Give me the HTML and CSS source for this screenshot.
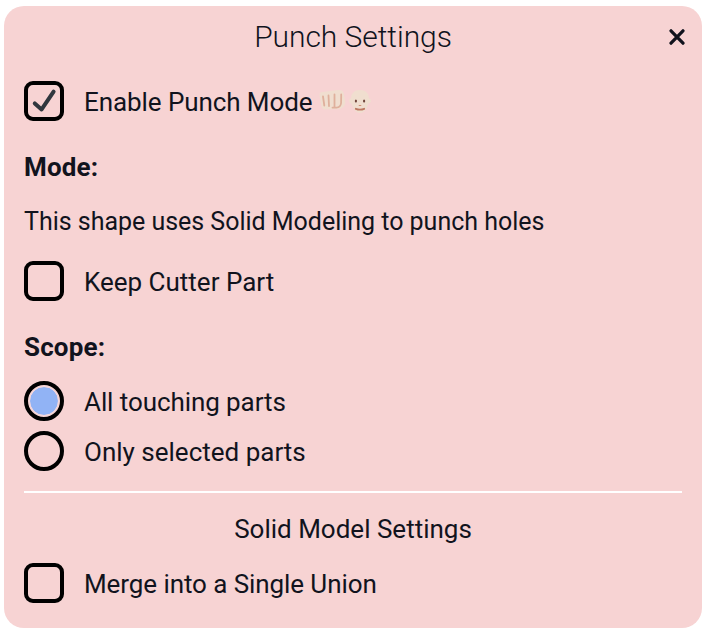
FILE: index.html
```html
<!DOCTYPE html>
<html lang="en">
<head>
<meta charset="utf-8">
<title>Punch Settings</title>
<link rel="stylesheet" href="styles.css">
</head>
<body>
<main class="panel">
  <header class="header">
    <h1 class="title">Punch Settings</h1>
    <button class="close" aria-label="Close">
      <svg width="16" height="16" viewBox="0 0 16 16"><path d="M2 1.8 14 14.2M14 1.8 2 14.2"/></svg>
    </button>
  </header>
  <div class="row">
    <span class="box"><svg class="check" width="32" height="32" viewBox="0 0 32 32"><path d="M6.8 18.4 13.6 24.4 25.6 6.6"/></svg></span>
    <span class="label tight">Enable Punch Mode</span>
    <svg class="emoji fist" width="28" height="26" viewBox="0 0 28 26">
      <path class="skin" d="M1.6 8C1 5.3 2.2 4.2 4.5 4L20 2C23.5 1.5 25.5 3 25.8 6L27.3 14C27.3 18 24.5 20.8 20 21.2L6.5 21.2C4.5 21 3.8 20 3.4 17.5Z"/>
      <path class="crease" d="M5 8.5 6.3 17.5M10.5 7.5 11 18M16.5 6.5V19M23.2 6.5 23.1 15Q22.5 19.6 18.5 19.6H14.5"/>
    </svg>
    <svg class="emoji face" width="24" height="26" viewBox="0 0 24 26">
      <path class="skin" d="M12 2C6.5 2 3.2 5.5 3 10.2Q.8 10.6 1 13Q1.2 15.3 3.5 15.5C5 20.5 8 25 12 25S19 20.5 20.5 15.5Q22.8 15.3 23 13Q23.2 10.6 21 10.2C20.8 5.5 17.5 2 12 2Z"/>
      <ellipse class="eye" cx="7.9" cy="13" rx="1.1" ry="1.6"/>
      <ellipse class="eye" cx="16.1" cy="13" rx="1.1" ry="1.6"/>
      <path class="nose" d="M10.3 17Q12 19 13.7 17Z"/>
      <path class="mouth" d="M7.8 20.8Q12 22.6 16.2 20.8"/>
    </svg>
  </div>
  <h2 class="heading">Mode:</h2>
  <p class="note">This shape uses Solid Modeling to punch holes</p>
  <div class="row"><span class="box"></span><span class="label">Keep Cutter Part</span></div>
  <h2 class="heading">Scope:</h2>
  <div class="row"><span class="radio on"></span><span class="label tight">All touching parts</span></div>
  <div class="row next"><span class="radio"></span><span class="label">Only selected parts</span></div>
  <hr class="rule">
  <h3 class="subtitle">Solid Model Settings</h3>
  <div class="row"><span class="box"></span><span class="label tight">Merge into a Single Union</span></div>
</main>
</body>
</html>
```
FILE: styles.css
```css
*, *::before { box-sizing: border-box; }
body { margin: 0; background: #fff; font-family: Roboto, sans-serif; color: #11131d; }
.panel {
  width: 698px; height: 622px; margin: 6px 4px 0;
  padding: 0 20px; background: #f7d3d3; border-radius: 20px;
  font-size: 26px;
}
.header { display: grid; grid-template-columns: 1fr auto 1fr; align-items: center; height: 62px; margin-bottom: 13px; }
.title { grid-column: 2; margin: 0; font-size: 30px; font-weight: 300; line-height: 62px; letter-spacing: -0.05px; }
.close { justify-self: end; display: flex; margin-right: -3px; padding: 0; border: 0; background: none; }
.close path { fill: none; stroke: #11131d; stroke-width: 3.2; stroke-linecap: round; }
.row { display: flex; align-items: center; height: 40px; }
.row.next { margin-top: 10px; }
.box, .radio { flex: none; width: 40px; height: 40px; margin-right: 20px; border: 4px solid #000; border-radius: 9px; }
.radio { border-radius: 50%; padding: 1px; }
.radio.on::before { content: ""; display: block; width: 30px; height: 30px; border: 1px solid #f3d9de; border-radius: 50%; background: #91b3f5; background-clip: padding-box; }
.check { display: block; }
.check path { fill: none; stroke: #30373e; stroke-width: 4; stroke-linecap: round; stroke-linejoin: round; }
.label { line-height: 40px; padding-top: 1px; }
.label.tight { letter-spacing: -0.08px; }
.fist { margin-left: 5px; }
.face { margin-left: 2px; }
.skin { fill: #f0decf; }
.crease { fill: none; stroke: #dfb09c; stroke-width: 1.8; stroke-linecap: round; }
.eye { fill: #70463c; }
.nose { fill: #c98468; }
.mouth { fill: none; stroke: #bd7861; stroke-width: 1.8; stroke-linecap: round; }
.heading { height: 40px; margin: 26px 0 0; font-size: 26px; font-weight: 700; line-height: 40px; letter-spacing: 0.15px; }
.row + .heading + .row { margin-top: 14px; }
.note { height: 40px; margin: 15px 0 19px; font-size: 25px; line-height: 40px; letter-spacing: -0.02px; }
.rule { height: 2px; margin: 20px 0 0; border: 0; background: #fff; }
.subtitle { height: 40px; margin: 16px 0 14px; font-size: 26px; font-weight: 400; line-height: 40px; text-align: center; }
```
